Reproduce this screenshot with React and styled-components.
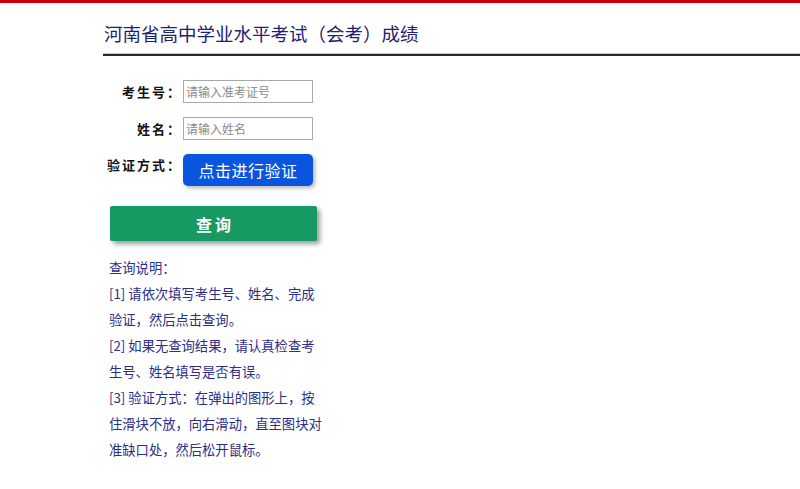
import React, { useState } from "react";
import styled, { createGlobalStyle } from "styled-components";

const GlobalStyle = createGlobalStyle`
  body {
    margin: 0;
    background: #fff;
    font-family: "Noto Sans CJK SC", "Noto Sans", sans-serif;
  }
`;

const TopBar = styled.div`
  height: 3px;
  background: #c8000a;
`;

const Page = styled.div`
  padding-left: 103px;
`;

const Header = styled.div`
  padding-top: 17px;
  padding-bottom: 8px;
  border-bottom: 2px solid #2a2a2a;
  box-shadow: 0 -1px 0 #c8c8c8 inset;
`;

const Title = styled.h1`
  margin: 0;
  font-size: 18.5px;
  line-height: 26px;
  font-weight: normal;
  color: #1e2172;
  padding-left: 1px;
`;

const Form = styled.div`
  margin-top: 24px;
  padding-left: 2px;
  display: flex;
  flex-direction: column;
  gap: 14px;
`;

const Row = styled.div`
  display: flex;
  align-items: ${(p) => (p.$top ? "flex-start" : "center")};
  gap: 1px;
`;

const Label = styled.label`
  width: 77px;
  text-align: right;
  font-size: 13px;
  font-weight: bold;
  letter-spacing: 2px;
  color: #111;
  padding-top: ${(p) => (p.$top ? "1px" : "0")};
  white-space: nowrap;
`;

const Input = styled.input`
  box-sizing: border-box;
  width: 130px;
  height: 23px;
  border: 1px solid #a9a9a9;
  padding: 0 2px;
  font-family: inherit;
  font-size: 12px;
  outline: none;

  &::placeholder {
    color: #8a8a8a;
  }
`;

const VerifyButton = styled.button`
  width: 130px;
  height: 32px;
  border: none;
  border-radius: 5px;
  background: #0a55de;
  color: #fff;
  font-family: inherit;
  font-size: 16px;
  letter-spacing: 0.5px;
  box-shadow: 2px 2px 4px rgba(0, 0, 0, 0.3);
  cursor: pointer;
`;

const QueryButton = styled.button`
  display: block;
  margin: 20px 0 0 7px;
  width: 207px;
  height: 35px;
  border: none;
  border-radius: 2px;
  background: #169a62;
  color: #fff;
  font-family: inherit;
  font-size: 16px;
  font-weight: bold;
  letter-spacing: 3px;
  text-indent: 3px;
  box-shadow: 3px 3px 5px rgba(0, 0, 0, 0.4);
  cursor: pointer;
`;

const Notes = styled.div`
  margin: 14px 0 0 6px;
  width: 216px;
  font-size: 13.3px;
  line-height: 26px;
  color: #2b2d8a;
`;

const App = () => {
  const [examNo, setExamNo] = useState("");
  const [name, setName] = useState("");

  return (
    <>
      <GlobalStyle />
      <TopBar />
      <Page>
        <Header>
          <Title>河南省高中学业水平考试（会考）成绩</Title>
        </Header>
        <Form>
          <Row>
            <Label>考生号：</Label>
            <Input
              placeholder="请输入准考证号"
              value={examNo}
              onChange={(e) => setExamNo(e.target.value)}
            />
          </Row>
          <Row>
            <Label>姓名：</Label>
            <Input
              placeholder="请输入姓名"
              value={name}
              onChange={(e) => setName(e.target.value)}
            />
          </Row>
          <Row $top>
            <Label $top>验证方式：</Label>
            <VerifyButton type="button">点击进行验证</VerifyButton>
          </Row>
        </Form>
        <QueryButton type="button">查询</QueryButton>
        <Notes>
          <div>查询说明：</div>
          <div>[1] 请依次填写考生号、姓名、完成验证，然后点击查询。</div>
          <div>[2] 如果无查询结果，请认真检查考生号、姓名填写是否有误。</div>
          <div>
            [3] 验证方式：在弹出的图形上，按住滑块不放，向右滑动，直至图块对准缺口处，然后松开鼠标。
          </div>
        </Notes>
      </Page>
    </>
  );
};

export default App;
